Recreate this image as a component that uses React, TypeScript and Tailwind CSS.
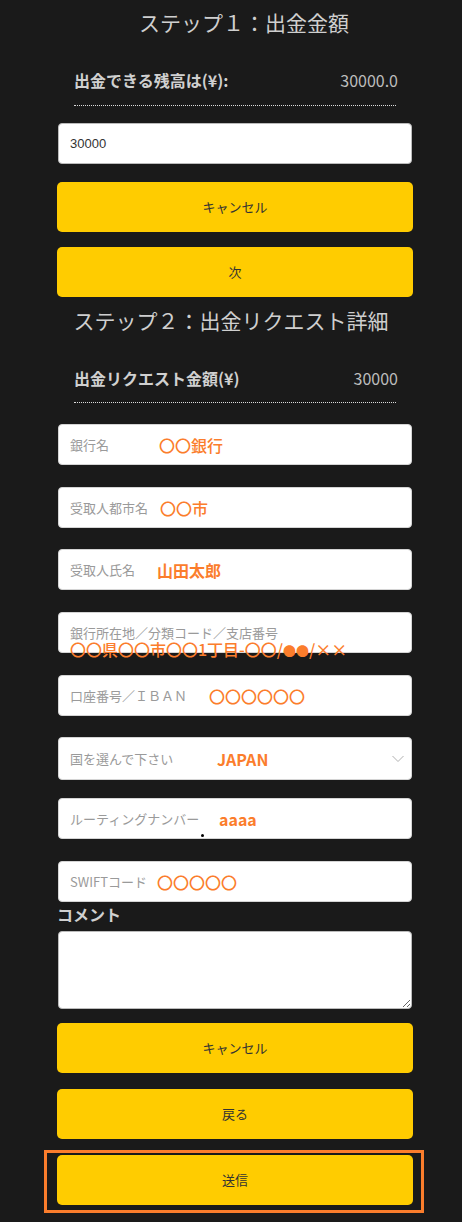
const jp = { fontFamily: '"Noto Sans CJK JP", sans-serif' };

type Field = {
  placeholder: string;
  value: React.ReactNode;
  left: number;
  bold?: boolean;
  mt: string;
  h?: string;
  select?: boolean;
  wrap?: boolean;
  dot?: boolean;
};

const fields: Field[] = [
  { placeholder: "銀行名", value: "〇〇銀行", left: 100, mt: "mt-[21px]" },
  { placeholder: "受取人都市名", value: "〇〇市", left: 101, mt: "mt-[22px]" },
  { placeholder: "受取人氏名", value: "山田太郎", left: 98, bold: true, mt: "mt-[21px]" },
  {
    placeholder: "銀行所在地／分類コード／支店番号",
    value: (
      <>
        〇〇県〇〇市〇〇1丁目-〇〇/<span className="text-[13px]">●●</span>/××
      </>
    ),
    left: 11,
    mt: "mt-[22px]",
    wrap: true,
  },
  { placeholder: "口座番号／ＩＢＡＮ", value: "〇〇〇〇〇〇", left: 150, mt: "mt-[22px]" },
  { placeholder: "国を選んで下さい", value: "JAPAN", left: 158, bold: true, mt: "mt-[21px]", h: "h-[43px]", select: true },
  { placeholder: "ルーティングナンバー", value: "aaaa", left: 160, bold: true, mt: "mt-[18px]", dot: true },
  { placeholder: "SWIFTコード", value: "〇〇〇〇〇", left: 98, mt: "mt-[22px]" },
];

const YellowButton = ({ label, className = "" }: { label: string; className?: string }) => (
  <button className={`w-full h-[50px] rounded-[5px] bg-[#ffcc00] text-[13px] text-[#333] ${className}`}>
    {label}
  </button>
);

const App = () => {
  return (
    <div className="w-full min-h-[1222px] bg-[#1a1a1a] overflow-hidden" style={jp}>
      <div className="w-[356px] ml-[57px]">
        {/* step 1 */}
        <div className="h-[46px] flex items-center justify-center pl-[18px] text-[21px] text-[#cfcfcf]">
          ステップ１：出金金額
        </div>
        <div className="ml-[17px] mr-[15px] mt-[14px] h-[40px] flex items-center justify-between text-[16px]">
          <span className="font-bold text-[#d0d0d0]">出金できる残高は(¥):</span>
          <span className="text-[#bdbdbd]">30000.0</span>
        </div>
        <div className="mx-[17px] mt-[5px] border-t border-dotted border-[#dcdcdc]" />
        <div
          className="mt-[17px] mx-px h-[41px] rounded-[4px] bg-white border border-[#bbb] flex items-center pl-[11px] text-[13px] text-[#333]"
          style={{ fontFamily: '"Liberation Sans", sans-serif' }}
        >
          30000
        </div>
        <YellowButton label="キャンセル" className="mt-[18px]" />
        <YellowButton label="次" className="mt-[15px]" />

        {/* step 2 */}
        <div className="h-[48px] flex items-center justify-center pr-[8px] text-[21px] text-[#cfcfcf]">
          ステップ２：出金リクエスト詳細
        </div>
        <div className="ml-[17px] mr-[15px] mt-[13px] h-[40px] flex items-center justify-between text-[16px]">
          <span className="font-bold text-[#d0d0d0]">出金リクエスト金額(¥)</span>
          <span className="text-[#bdbdbd]">30000</span>
        </div>
        <div className="mx-[17px] mt-[4px] border-t border-dotted border-[#dcdcdc]" />

        {fields.map((f, i) => (
          <div
            key={i}
            className={`relative ${f.mt} mx-px ${f.h ?? "h-[41px]"} rounded-[4px] bg-white border border-[#d4d4d4] flex ${f.wrap ? "items-start pt-[13px]" : "items-center"} pl-[11px] text-[13px] text-[#9a9a9a]`}
          >
            <span className={f.wrap ? "leading-none" : ""}>{f.placeholder}</span>
            <span
              className={`absolute text-[16px] leading-none text-[#fb7d2c] whitespace-nowrap ${f.bold ? "font-bold" : "font-medium"} ${f.wrap ? "top-[28px]" : "top-1/2 -translate-y-1/2"}`}
              style={{ left: f.left }}
            >
              {f.value}
            </span>
            {f.select && (
              <svg className="absolute right-[7px] top-1/2 -translate-y-1/2" width="12" height="7" viewBox="0 0 12 7" fill="none">
                <polyline points="0.5,0.5 6,6 11.5,0.5" stroke="#b0b0b0" strokeWidth="1" />
              </svg>
            )}
            {f.dot && <span className="absolute left-[142px] top-[35px] w-[3px] h-[3px] rounded-full bg-black" />}
          </div>
        ))}

        <div className="h-[24px] flex items-center text-[16px] font-bold text-[#d0d0d0]">コメント</div>
        <textarea
          readOnly
          className="block mt-[5px] mx-px w-[354px] h-[78px] rounded-[4px] bg-white border border-[#bbb]"
        />
        <YellowButton label="キャンセル" className="mt-[14px]" />
        <YellowButton label="戻る" className="mt-[16px]" />
        <div className="mt-[11px] ml-[-13px] w-[380px] border-[3px] border-[#fb7d2c] pt-[2px] pb-[5px] pl-[10px] pr-[8px]">
          <YellowButton label="送信" />
        </div>
      </div>
    </div>
  );
};

export default App;
